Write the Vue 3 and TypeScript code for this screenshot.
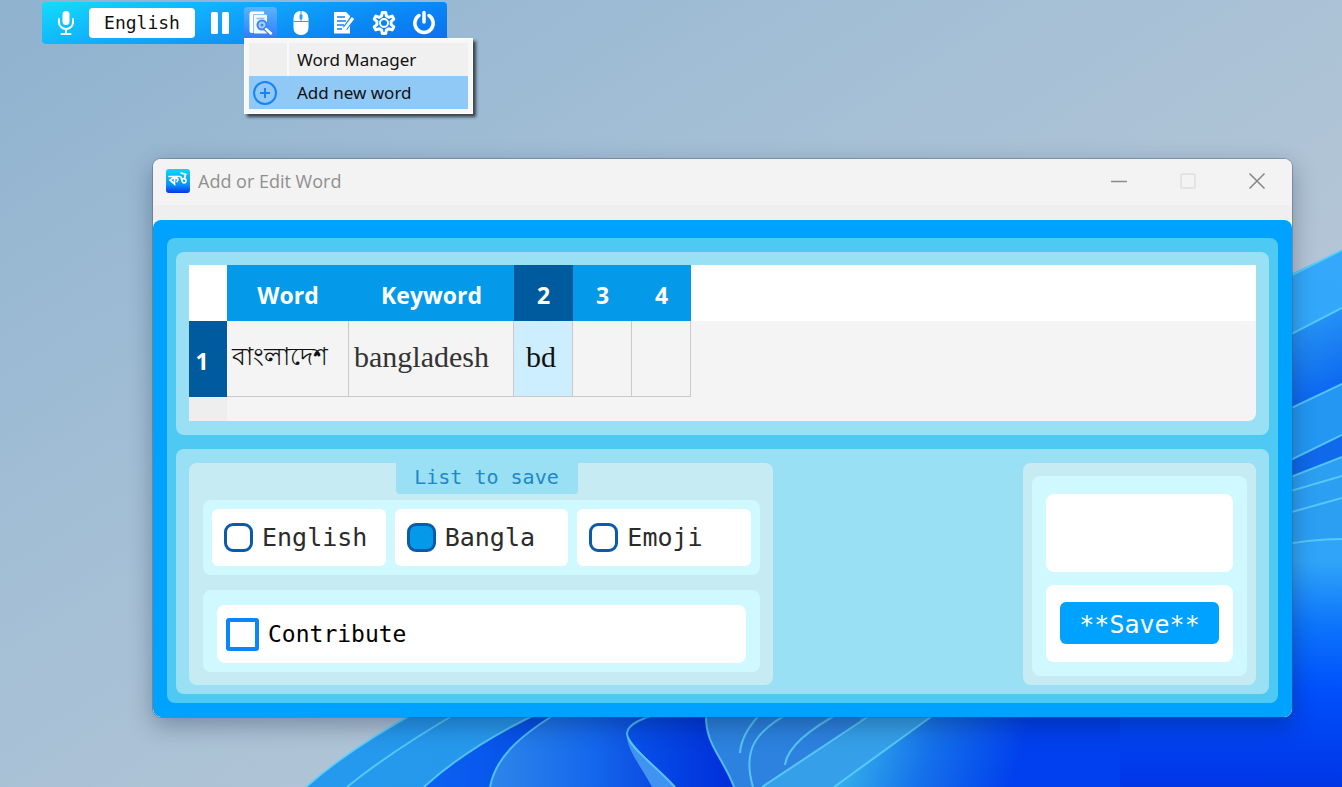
<script setup lang="ts">
import { ref } from 'vue'

interface ListOption {
  id: string
  label: string
  checked: boolean
}

const language = ref('English')
const columns = ['Word', 'Keyword', '2', '3', '4']
const activeColumn = 2
const rows = [['বাংলাদেশ', 'bangladesh', 'bd', '', '']]

const lists = ref<ListOption[]>([
  { id: 'english', label: 'English', checked: false },
  { id: 'bangla', label: 'Bangla', checked: true },
  { id: 'emoji', label: 'Emoji', checked: false },
])
const contribute = ref(false)
const message = ref('')
</script>

<template>
  <div class="desktop">
    <svg class="wallpaper" viewBox="0 0 1342 787" preserveAspectRatio="none" aria-hidden="true">
      <defs>
        <linearGradient id="sky" gradientUnits="userSpaceOnUse" x1="0" y1="0" x2="500" y2="787">
          <stop offset="0" stop-color="#8fb2cf" />
          <stop offset="0.5" stop-color="#a2bed5" />
          <stop offset="1" stop-color="#b3c5d6" />
        </linearGradient>
        <linearGradient id="deep" x1="0" y1="0" x2="0" y2="1">
          <stop offset="0" stop-color="#34a9fb" />
          <stop offset="0.58" stop-color="#30a4f8" />
          <stop offset="0.7" stop-color="#0c74fb" />
          <stop offset="0.82" stop-color="#0050fb" />
          <stop offset="1" stop-color="#0035e6" />
        </linearGradient>
        <linearGradient id="fold" x1="0" y1="0" x2="0.3" y2="1">
          <stop offset="0" stop-color="#2ea4f6" />
          <stop offset="1" stop-color="#0a62f0" />
        </linearGradient>
        <linearGradient id="petal1" x1="0" y1="0" x2="1" y2="0">
          <stop offset="0" stop-color="#2499ee" />
          <stop offset="1" stop-color="#2f97e6" />
        </linearGradient>
        <linearGradient id="petal2" x1="0" y1="0" x2="1" y2="0">
          <stop offset="0" stop-color="#0a62f2" />
          <stop offset="1" stop-color="#0036d6" />
        </linearGradient>
        <linearGradient id="petal3" x1="0" y1="0" x2="1" y2="0">
          <stop offset="0" stop-color="#2d86ea" />
          <stop offset="0.45" stop-color="#1467ec" />
          <stop offset="1" stop-color="#002cd8" />
        </linearGradient>
        <linearGradient id="petal4" x1="0" y1="0" x2="1" y2="0">
          <stop offset="0" stop-color="#0753ea" />
          <stop offset="1" stop-color="#002bd8" />
        </linearGradient>
        <linearGradient id="glow" gradientUnits="userSpaceOnUse" x1="850" y1="740" x2="1010" y2="790">
          <stop offset="0" stop-color="#34b0ec" />
          <stop offset="0.45" stop-color="#1673ea" />
          <stop offset="1" stop-color="#0040ee" />
        </linearGradient>
      </defs>
      <rect width="1342" height="787" fill="url(#sky)" />
      <path d="M1180 330 Q1260 288 1342 250 V787 H900 V600 Z" fill="url(#deep)" />
      <path d="M1270 345 L1342 308 V384 L1270 418Z" fill="url(#fold)" />
      <path d="M1270 418 L1342 384 V435 L1270 470Z" fill="#2397f2" />
      <path d="M1270 470 L1342 435 V457 L1270 485Z" fill="#0f69ea" />
      <path d="M1270 485 L1342 457 V539 L1270 547Z" fill="#2c9ff3" />
      <g class="rim">
        <path d="M1270 286 L1342 250" />
        <path d="M1270 345 L1342 308" />
        <path d="M1270 418 L1342 384" />
        <path d="M1270 470 L1342 435" />
        <path d="M1270 485 L1342 457" />
        <path d="M1270 497 L1342 476" />
        <path d="M1270 518 L1342 498" />
        <path d="M1270 547 Q1310 539 1342 539" />
      </g>
      <path d="M306 787 Q350 748 420 710 H1000 V787Z" fill="url(#petal1)" />
      <path d="M424 787 Q470 745 545 710 H700 V787Z" fill="url(#petal2)" />
      <path d="M490 787 C495 760 515 738 562 710 H720 V787Z" fill="url(#petal3)" />
      <path d="M675 787 C655 765 626 745 627 733 C628 724 640 719 668 710 H740 V787Z" fill="url(#petal4)" />
      <path d="M652 787 C640 765 626 748 627 735 C640 755 660 770 675 787Z" fill="#4193f2" />
      <path d="M706 710 C704 745 722 755 734 787 H860 V710Z" fill="#2c82de" />
      <path d="M762 787 L884 706 H960 L834 787Z" fill="#35a0e9" />
      <path d="M834 787 L946 706 H1120 V787Z" fill="url(#glow)" />
      <g class="rim">
        <path d="M306 787 Q350 748 420 710" />
        <path d="M347 787 Q390 752 462 710" />
        <path d="M424 787 Q470 745 545 710" />
        <path d="M490 787 C495 760 515 738 562 710" />
        <path d="M675 787 C655 765 626 745 627 733 C628 724 640 719 668 710" />
        <path d="M706 710 C704 745 722 755 734 787" />
        <path d="M764 710 Q741 733 740 753" />
        <path d="M795 710 C755 730 742 750 753 787" />
        <path d="M845 710 Q788 740 785 765" />
        <path d="M762 787 L884 706" />
        <path d="M834 787 L946 706" />
      </g>
    </svg>

    <header class="toolbar">
      <button class="tool tool-mic" type="button" aria-label="Voice typing">
        <svg width="18" height="26" viewBox="0 0 18 26" fill="none" stroke="#fff" stroke-width="2">
          <rect x="5.5" y="1" width="7" height="14" rx="3.5" fill="#fff" stroke="none" />
          <path d="M2 9v3.500a7 6.500 0 0 0 14 0V9M9 19v4.500M4.500 24h9" stroke-linecap="round" />
        </svg>
      </button>
      <button class="language" type="button">{{ language }}</button>
      <button class="tool tool-pause" type="button" aria-label="Pause">
        <svg width="18" height="24" viewBox="0 0 18 24" fill="#fff">
          <rect x="0" y="1" width="7" height="22" rx="1.500" />
          <rect x="11" y="1" width="7" height="22" rx="1.500" />
        </svg>
      </button>
      <div class="words">
        <button class="tool tool-words" type="button" aria-label="Words" aria-expanded="true">
          <svg width="25" height="26" viewBox="0 0 25 26" fill="none">
            <path d="M3.500 1.500H16v3H5.500V23H4a2.500 2.500 0 0 1-2.500-2.500V4A2.500 2.500 0 0 1 3.500 1.500z" fill="#fff" />
            <path d="M6 5h13v18.500H6z" fill="#f2f8ff" />
            <path d="M5.500 4.500V23M5.500 4.500H18" stroke="#8fc3ff" />
            <path d="M8.500 8.500h8" stroke="#8dbcfb" stroke-width="1.500" />
            <circle cx="14" cy="15" r="4.500" fill="#a9cffd" stroke="#3a86f5" stroke-width="2" />
            <circle cx="14" cy="15" r="1.500" fill="#3a86f5" />
            <path d="M18 19l5 4.500" stroke="#3a86f5" stroke-width="5" stroke-linecap="round" />
            <path d="M18 19l5 4.500" stroke="#fff" stroke-width="2.500" stroke-linecap="round" />
          </svg>
        </button>
        <ul class="menu" role="menu">
          <li role="none">
            <button class="menu-item" type="button" role="menuitem">
              <span class="menu-icon"></span><span class="menu-text">Word Manager</span>
            </button>
          </li>
          <li role="none">
            <button class="menu-item menu-item-active" type="button" role="menuitem">
              <span class="menu-icon">
                <svg width="26" height="26" viewBox="0 0 26 26" fill="none" stroke="#1683f7" stroke-width="2">
                  <circle cx="13" cy="13" r="11" />
                  <path d="M13 8v10M8 13h10" />
                </svg>
              </span>
              <span class="menu-text">Add new word</span>
            </button>
          </li>
        </ul>
      </div>
      <button class="tool tool-mouse" type="button" aria-label="Mouse">
        <svg width="16" height="26" viewBox="0 0 16 26">
          <rect x="0.500" y="1" width="15" height="24" rx="7" fill="#fff" />
          <path d="M0.500 11.500h15M8 1v3M8 9v3" stroke="#2f9dff" stroke-width="1" />
          <rect x="6.500" y="4" width="3" height="5.500" rx="1.500" fill="#2f9dff" />
        </svg>
      </button>
      <button class="tool" type="button" aria-label="Notes">
        <svg width="22" height="24" viewBox="0 0 22 24">
          <path d="M1 1h12l4 4v17.500H1z" fill="#fff" />
          <path d="M4 6h8M4 10h9M4 14h7M4 18h5" stroke="#1583f0" stroke-width="1.500" />
          <path d="M19.500 7L12 17.500" stroke="#1583f0" stroke-width="5" />
          <path d="M20 7L12 17.500" stroke="#fff" stroke-width="3" />
          <path d="M11 16l3 2-4 2z" fill="#fff" />
        </svg>
      </button>
      <button class="tool" type="button" aria-label="Settings">
        <svg width="26" height="26" viewBox="0 0 26 26" fill="none" stroke="#fff">
          <path d="M11.300 2.500h3.400l.7 3.500 2.300 1.300 3.400-1.200 1.700 3-2.700 2.400v3l2.700 2.400-1.700 3-3.400-1.200-2.300 1.300-.7 3.500h-3.400l-.7-3.500-2.300-1.300-3.400 1.200-1.700-3 2.700-2.400v-3l-2.700-2.400 1.700-3 3.400 1.200 2.300-1.300z" stroke-width="3" stroke-linejoin="round" />
          <circle cx="13" cy="13" r="4" stroke-width="2" />
        </svg>
      </button>
      <button class="tool" type="button" aria-label="Quit">
        <svg width="24" height="26" viewBox="0 0 24 26" fill="none" stroke="#fff" stroke-width="3.500" stroke-linecap="round">
          <path d="M7 5.500a9.200 9.200 0 1 0 10 0M12 2.500v9.500" />
        </svg>
      </button>
    </header>

    <main class="window">
      <div class="titlebar">
        <svg class="logo" width="24" height="24" viewBox="0 0 24 24" aria-hidden="true">
          <defs>
            <linearGradient id="logo-fill" x1="0" y1="0" x2="0" y2="1">
              <stop offset="0" stop-color="#12d4fb" />
              <stop offset="0.65" stop-color="#0b93f8" />
              <stop offset="1" stop-color="#0737ea" />
            </linearGradient>
          </defs>
          <rect width="24" height="24" rx="3" fill="url(#logo-fill)" />
          <g fill="none" stroke="#fff" stroke-width="1.700" stroke-linecap="round">
            <path d="M3 7.500h11M8.500 7.500v7.500L4 11l4.500-3M8.500 9.500c3-1 4.500 1 2.500 3" />
            <path d="M15 4l5 1.500M15 8c1 3 1 6 3 6s3-3 1-4-3 0-3 1M19 9V6" />
          </g>
        </svg>
        <h1 class="title">Add or Edit Word</h1>
        <div class="controls">
          <button class="control" type="button" aria-label="Minimize">
            <svg width="18" height="18" viewBox="0 0 18 18"><path d="M1 9.500h16" stroke="#8b8b8b" stroke-width="1.500" /></svg>
          </button>
          <button class="control" type="button" aria-label="Maximize" disabled>
            <svg width="18" height="18" viewBox="0 0 18 18"><rect x="2" y="2" width="14" height="14" rx="1" fill="none" stroke="#dedede" stroke-width="1.500" /></svg>
          </button>
          <button class="control" type="button" aria-label="Close">
            <svg width="18" height="18" viewBox="0 0 18 18"><path d="M1.500 1.500l15 15M16.500 1.500l-15 15" stroke="#858585" stroke-width="1.500" /></svg>
          </button>
        </div>
      </div>

      <div class="frame">
        <div class="panel">
          <section class="card card-table">
            <div class="sheet">
              <table>
                <thead>
                  <tr>
                    <td class="corner"></td>
                    <th
                      v-for="(name, i) in columns"
                      :key="name"
                      scope="col"
                      :class="['column-' + i, { current: i === activeColumn }]"
                    >{{ name }}</th>
                  </tr>
                </thead>
                <tbody>
                  <tr v-for="(cells, r) in rows" :key="r">
                    <th class="row-number" scope="row">{{ r + 1 }}</th>
                    <td
                      v-for="(cell, i) in cells"
                      :key="i"
                      :class="['cell-' + i, { selected: i === activeColumn }]"
                    >{{ cell }}</td>
                  </tr>
                </tbody>
              </table>
              <div class="gutter"></div>
            </div>
          </section>

          <section class="card card-form">
            <div class="lists" role="group" aria-labelledby="lists-title">
              <h2 id="lists-title" class="lists-title">List to save</h2>
              <div class="options">
                <label v-for="item in lists" :key="item.id" class="option" :for="item.id">
                  <input :id="item.id" v-model="item.checked" class="box" type="checkbox" />
                  {{ item.label }}
                </label>
              </div>
              <div class="extra">
                <label class="contribute" for="contribute">
                  <input id="contribute" v-model="contribute" class="square" type="checkbox" />
                  Contribute
                </label>
              </div>
            </div>

            <div class="save">
              <div class="save-inner">
                <div class="message" role="status">{{ message }}</div>
                <div class="save-slot">
                  <button class="save-button" type="button">**Save**</button>
                </div>
              </div>
            </div>
          </section>
        </div>
      </div>
    </main>
  </div>
</template>

<style>
body {
  margin: 0;
}
</style>

<style scoped>
.desktop {
  --sans: "Open Sans", "Noto Sans", sans-serif;
  --mono: "DejaVu Sans Mono", "Liberation Mono", monospace;
  position: relative;
  box-sizing: border-box;
  min-height: 100vh;
  padding: 2px 50px 70px 42px;
  overflow: hidden;
  font-family: var(--sans);
}

.desktop *,
.desktop *::before {
  box-sizing: border-box;
}

.wallpaper {
  position: absolute;
  inset: 0;
  width: 100%;
  height: 100%;
}

.rim {
  fill: none;
  stroke: #62d3fa;
  stroke-width: 2;
  stroke-opacity: 0.8;
}

button {
  margin: 0;
  padding: 0;
  border: 0;
  background: none;
  font-family: inherit;
}

svg {
  display: block;
}

.toolbar {
  position: relative;
  z-index: 2;
  display: flex;
  align-items: center;
  width: max-content;
  height: 42px;
  padding-right: 3px;
  border-radius: 4px;
  background: linear-gradient(165deg, #12dcfb 0%, #12aefc 35%, #0a84f4 75%, #0a6eee 100%);
}

.tool {
  display: flex;
  align-items: center;
  justify-content: center;
  width: 40px;
  height: 32px;
}

.tool-mic {
  width: 47px;
}

.tool-pause {
  width: 49px;
}

.tool-mouse {
  width: 47px;
}

.tool-words {
  width: 33px;
  border-radius: 4px;
  background: linear-gradient(#59b4ff, #2e7cf8);
}

.language {
  width: 106px;
  height: 30px;
  border-radius: 4px;
  background: #fff;
  color: #111;
  font-family: var(--mono);
  font-size: 18px;
  line-height: 30px;
}

.words {
  position: relative;
}

.menu {
  position: absolute;
  top: 31px;
  left: 0;
  width: 229px;
  margin: 0;
  padding: 4px;
  border: 1px solid #fff;
  background: #f7f7f7;
  box-shadow: 3px 3px 3px rgba(0, 0, 0, 0.65);
  list-style: none;
}

.menu-item {
  display: flex;
  align-items: center;
  width: 100%;
  height: 33px;
  background: linear-gradient(90deg, #efefef 38px, #fafafa 38px, #fafafa 40px, #f0f0f0 40px);
  color: #111;
  font-size: 17px;
  text-align: left;
}

.menu-item-active {
  background: #90c8f6;
}

.menu-icon {
  width: 48px;
  padding-left: 3px;
}

.menu-text {
  font-family: "Noto Sans", sans-serif;
}

.window {
  position: relative;
  margin: 115px 0 0 111px;
  overflow: hidden;
  border-radius: 8px;
  background: #fff;
  box-shadow: 0 0 0 1px rgba(70, 90, 110, 0.4), 0 8px 24px rgba(0, 20, 50, 0.32);
}

.titlebar {
  display: flex;
  align-items: center;
  height: 61px;
  padding: 0 1px 17px 13px;
  background: linear-gradient(#f3f3f3 46px, #efefef 46px);
}

.title {
  margin: 0 auto 0 8px;
  color: #8f8f8f;
  font-size: 18px;
  font-weight: 400;
  line-height: 24px;
}

.controls {
  display: flex;
}

.control {
  display: flex;
  align-items: center;
  justify-content: center;
  width: 69px;
  height: 40px;
}

.frame {
  padding: 18px 14px 14px;
  border-radius: 8px;
  background: #00a2ff;
}

.panel {
  display: flex;
  flex-direction: column;
  gap: 14px;
  padding: 14px 9px 9px;
  border-radius: 8px;
  background: #4dc9f3;
}

.card {
  padding: 14px 13px;
  border-radius: 8px;
  background: #9ae0f5;
}

.card-table {
  padding-top: 13px;
}

.sheet {
  height: 156px;
  overflow: hidden;
  border-radius: 0 0 8px 0;
  background: linear-gradient(#fff 56px, #f4f4f4 56px);
}

.gutter {
  width: 38px;
  height: 24px;
  background: #eee;
}

table {
  border-collapse: separate;
  border-spacing: 0;
  table-layout: fixed;
  width: 502px;
}

.corner {
  width: 38px;
  background: #fff;
}

thead tr {
  height: 56px;
}

tbody tr {
  height: 76px;
}

th {
  padding: 3px 0 0;
  background: #0499e9;
  color: #fff;
  font-size: 23px;
  font-weight: 700;
  line-height: 30px;
}

.column-0 {
  width: 122px;
}

.column-1 {
  width: 165px;
}

th.current,
th.row-number {
  background: #005a9e;
}

th.row-number {
  padding: 4px 12px 0 0;
}

tbody td {
  padding: 0 5px 4px;
  border-right: 1px solid #c9c9c9;
  border-bottom: 1px solid #c9c9c9;
  color: #333;
  font-family: "Liberation Serif", serif;
  font-size: 30px;
  line-height: 36px;
}

td.cell-0 {
  color: #111;
  font-size: 25px;
}

td.selected {
  background: #cceeff;
  color: #111;
  padding-left: 12px;
}

.card-form {
  display: flex;
  justify-content: space-between;
  padding-bottom: 9px;
}

.lists {
  display: flex;
  flex: 0 1 584px;
  flex-direction: column;
  padding: 0 13px 13px 14px;
  border-radius: 8px;
  background: #c7ebf2;
}

.lists-title {
  align-self: center;
  width: 182px;
  height: 31px;
  margin: 0 0 6px 10px;
  border-radius: 0 0 4px 4px;
  background: #9ae0f5;
  color: #2088c4;
  font-family: var(--mono);
  font-size: 20px;
  font-weight: 400;
  line-height: 28px;
  text-align: center;
}

.options {
  display: flex;
  gap: 9px;
  padding: 9px;
  border-radius: 8px;
  background: #cff8ff;
}

.option {
  display: flex;
  flex: 1;
  align-items: center;
  gap: 9px;
  height: 57px;
  padding-left: 12px;
  border-radius: 6px;
  background: #fff;
  color: #2b2b2b;
  font-family: var(--mono);
  font-size: 25px;
}

.box {
  appearance: none;
  flex: none;
  width: 29px;
  height: 29px;
  margin: 0;
  border: 3px solid #0a5cab;
  border-radius: 9px;
  background: #fff;
}

.box:checked {
  background: #0499e9;
}

.extra {
  margin-top: 15px;
  padding: 15px 14px 9px;
  border-radius: 8px;
  background: #cff8ff;
}

.contribute {
  display: flex;
  align-items: center;
  gap: 9px;
  height: 58px;
  padding-left: 9px;
  border-radius: 8px;
  background: #fff;
  color: #000;
  font-family: var(--mono);
  font-size: 23px;
}

.square {
  appearance: none;
  flex: none;
  width: 33px;
  height: 33px;
  margin: 0;
  border: 4px solid #0a84ff;
  border-radius: 3px;
  background: #fff;
}

.square:checked {
  background: #0a84ff;
}

.save {
  padding: 13px 9px 9px;
  border-radius: 8px;
  background: #c7ebf2;
}

.save-inner {
  padding: 18px 14px 14px;
  border-radius: 8px;
  background: #cff8ff;
}

.message {
  width: 187px;
  height: 78px;
  border-radius: 8px;
  background: #fff;
}

.save-slot {
  margin-top: 13px;
  padding: 17px 14px 18px;
  border-radius: 8px;
  background: #fff;
}

.save-button {
  display: block;
  width: 100%;
  height: 42px;
  padding-top: 3px;
  border-radius: 6px;
  background: #00a2ff;
  color: #fff;
  font-family: var(--mono);
  font-size: 25px;
  line-height: 39px;
}
</style>
